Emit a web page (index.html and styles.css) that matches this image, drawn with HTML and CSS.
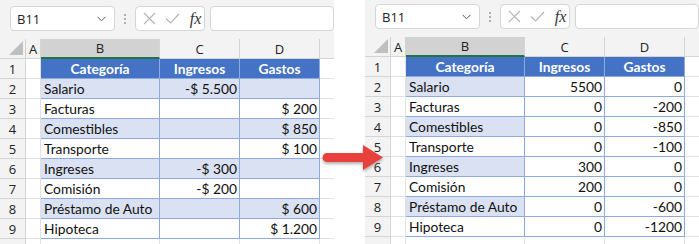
FILE: index.html
```html
<!DOCTYPE html>
<html lang="es">
<head>
<meta charset="utf-8">
<link rel="stylesheet" href="styles.css">
</head>
<body>
<div class="stage">
  <div class="panel">
    <div class="toolbar">
      <div class="namebox"><span>B11</span><svg class="chev" width="9" height="6" viewBox="0 0 9 6"><path d="M0.5 0.8 L4.5 4.8 L8.5 0.8" fill="none" stroke="#555" stroke-width="1"/></svg></div>
      <div class="dots"><i></i><i></i><i></i></div>
      <div class="fxbox">
        <svg width="13" height="13" viewBox="0 0 13 13"><path d="M1 1 L12 12 M12 1 L1 12" stroke="#b4b4b4" stroke-width="1.1" fill="none"/></svg>
        <svg width="15" height="11" viewBox="0 0 15 11"><path d="M1 5.5 L5.5 10 L14 1" stroke="#b4b4b4" stroke-width="1.1" fill="none"/></svg>
        <span class="fx">fx</span>
      </div>
      <div class="formula"></div>
    </div>
    <div class="sheet">
      <div class="corner"><b></b></div><div class="ch">A</div><div class="ch sel">B</div><div class="ch">C</div><div class="ch">D</div><div class="ch end"></div>

      <div class="rh">1</div><div class="c"></div><div class="th">Categoría</div><div class="th">Ingresos</div><div class="th">Gastos</div><div class="c e"></div>
      <div class="rh">2</div><div class="c"></div><div class="t b">Salario</div><div class="t b n">-$ 5.500</div><div class="t b n"></div><div class="c e"></div>
      <div class="rh">3</div><div class="c"></div><div class="t">Facturas</div><div class="t n"></div><div class="t n">$ 200</div><div class="c e"></div>
      <div class="rh">4</div><div class="c"></div><div class="t b">Comestibles</div><div class="t b n"></div><div class="t b n">$ 850</div><div class="c e"></div>
      <div class="rh">5</div><div class="c"></div><div class="t">Transporte</div><div class="t n"></div><div class="t n">$ 100</div><div class="c e"></div>
      <div class="rh">6</div><div class="c"></div><div class="t b">Ingreses</div><div class="t b n">-$ 300</div><div class="t b n"></div><div class="c e"></div>
      <div class="rh">7</div><div class="c"></div><div class="t">Comisión</div><div class="t n">-$ 200</div><div class="t n"></div><div class="c e"></div>
      <div class="rh">8</div><div class="c"></div><div class="t b">Préstamo de Auto</div><div class="t b n"></div><div class="t b n">$ 600</div><div class="c e"></div>
      <div class="rh">9</div><div class="c"></div><div class="t">Hipoteca</div><div class="t n"></div><div class="t n">$ 1.200</div><div class="c e"></div>
      <div class="rh"></div><div class="c"></div><div class="c"></div><div class="c"></div><div class="c"></div><div class="c e"></div>
    </div>
  </div>

  <div class="panel right">
    <div class="toolbar">
      <div class="namebox"><span>B11</span><svg class="chev" width="9" height="6" viewBox="0 0 9 6"><path d="M0.5 0.8 L4.5 4.8 L8.5 0.8" fill="none" stroke="#555" stroke-width="1"/></svg></div>
      <div class="dots"><i></i><i></i><i></i></div>
      <div class="fxbox">
        <svg width="13" height="13" viewBox="0 0 13 13"><path d="M1 1 L12 12 M12 1 L1 12" stroke="#b4b4b4" stroke-width="1.1" fill="none"/></svg>
        <svg width="15" height="11" viewBox="0 0 15 11"><path d="M1 5.5 L5.5 10 L14 1" stroke="#b4b4b4" stroke-width="1.1" fill="none"/></svg>
        <span class="fx">fx</span>
      </div>
      <div class="formula"></div>
    </div>
    <div class="sheet">
      <div class="corner"><b></b></div><div class="ch">A</div><div class="ch sel">B</div><div class="ch">C</div><div class="ch">D</div><div class="ch end"></div>

      <div class="rh">1</div><div class="c"></div><div class="th">Categoría</div><div class="th">Ingresos</div><div class="th">Gastos</div><div class="c e"></div>
      <div class="rh">2</div><div class="c"></div><div class="t b">Salario</div><div class="t n">5500</div><div class="t n">0</div><div class="c e"></div>
      <div class="rh">3</div><div class="c"></div><div class="t">Facturas</div><div class="t n">0</div><div class="t n">-200</div><div class="c e"></div>
      <div class="rh">4</div><div class="c"></div><div class="t b">Comestibles</div><div class="t n">0</div><div class="t n">-850</div><div class="c e"></div>
      <div class="rh">5</div><div class="c"></div><div class="t">Transporte</div><div class="t n">0</div><div class="t n">-100</div><div class="c e"></div>
      <div class="rh">6</div><div class="c"></div><div class="t b">Ingreses</div><div class="t n">300</div><div class="t n">0</div><div class="c e"></div>
      <div class="rh">7</div><div class="c"></div><div class="t">Comisión</div><div class="t n">200</div><div class="t n">0</div><div class="c e"></div>
      <div class="rh">8</div><div class="c"></div><div class="t b">Préstamo de Auto</div><div class="t n">0</div><div class="t n">-600</div><div class="c e"></div>
      <div class="rh">9</div><div class="c"></div><div class="t">Hipoteca</div><div class="t n">0</div><div class="t n">-1200</div><div class="c e"></div>
      <div class="rh"></div><div class="c"></div><div class="c"></div><div class="c"></div><div class="c"></div><div class="c e"></div>
    </div>
  </div>

  <svg class="arrow" width="70" height="40" viewBox="0 0 70 40">
    <defs>
      <filter id="sh" x="-20%" y="-30%" width="140%" height="170%">
        <feDropShadow dx="0" dy="2" stdDeviation="1.5" flood-color="#000" flood-opacity="0.3"/>
      </filter>
    </defs>
    <path d="M7 13 L43 13 L43 5 L63 17.5 L43 30 L43 22 L7 22 A4.5 4.5 0 0 1 7 13 Z" fill="#e8413c" filter="url(#sh)"/>
  </svg>
</div>
</body>
</html>
```

FILE: styles.css
```css
* { box-sizing: border-box; }
html, body { margin: 0; padding: 0; background: #fff; }
body { width: 699px; height: 244px; overflow: hidden; }

.stage {
  position: relative;
  display: flex;
  align-items: flex-start;
  gap: 31px;
  width: 699px;
  height: 244px;
  overflow: hidden;
}

.panel {
  width: 334px;
  height: 250px;
  overflow: hidden;
  background: #fff;
  flex: none;
}
.panel.right { margin-top: -2px; }

.toolbar {
  height: 39px;
  background: #f3f3f3;
  display: flex;
  align-items: flex-start;
  padding: 6px 0 0 10px;
  font-family: "Open Sans", "Noto Sans", sans-serif;
}
.namebox {
  width: 109px;
  height: 25px;
  background: #fff;
  border: 1px solid #d6d6d6;
  border-radius: 4px;
  display: flex;
  align-items: center;
  justify-content: space-between;
  padding: 0 8px 0 6px;
  font-size: 13px;
  color: #222;
}
.dots {
  width: 21px;
  height: 25px;
  display: flex;
  flex-direction: column;
  align-items: center;
  justify-content: center;
  gap: 2px;
}
.dots i { display: block; width: 2px; height: 2px; background: #9a9a9a; border-radius: 1px; }
.fxbox {
  width: 73px;
  height: 25px;
  background: #fff;
  border: 1px solid #d6d6d6;
  border-radius: 4px;
  display: flex;
  align-items: center;
  gap: 9px;
  padding-left: 7px;
}
.fx {
  font-family: "Liberation Serif", serif;
  font-style: italic;
  font-size: 16px;
  color: #333;
  margin-left: 1px;
}
.formula {
  margin-left: 5px;
  width: 130px;
  height: 25px;
  background: #fff;
  border: 1px solid #d6d6d6;
  border-radius: 4px;
}

.sheet {
  display: grid;
  grid-template-columns: 26px 15px 119px 80px 80px 14px;
  grid-auto-rows: 20px;
  font-family: Lato, "Liberation Sans", sans-serif;
  font-size: 13.8px;
  color: #111;
}
.sheet > div { border-right: 1px solid #e1e1e1; border-bottom: 1px solid #e1e1e1; }

.corner {
  background: #f3f3f3;
  position: relative;
}
.corner b {
  position: absolute;
  right: 2px;
  bottom: 3px;
  width: 0; height: 0;
  border-left: 14px solid transparent;
  border-bottom: 14px solid #bfbfbf;
}
.ch, .rh {
  background: #f3f3f3;
  font-family: "Open Sans", "Noto Sans", sans-serif;
  font-size: 13px;
  color: #222;
  display: flex;
  align-items: center;
  justify-content: center;
}
.sheet > .ch, .sheet > .rh, .sheet > .corner { border-color: #d4d4d4; }
.ch.sel {
  background: #d2d2d2;
  border-bottom: 2px solid #217346;
}
.ch.end { border-right: none; }
.c { background: #fff; }
.c.e { border-right: none; }

.th {
  background: #4472c4;
  color: #fff;
  font-weight: bold;
  display: flex;
  align-items: center;
  justify-content: center;
}
.sheet > .th { border-right: 1px solid #8ea9db; border-bottom: 1px solid #8ea9db; }
.t {
  background: #fff;
  display: flex;
  align-items: center;
  padding: 0 3px;
  white-space: nowrap;
}
.sheet > .t { border-right: 1px solid #8ea9db; border-bottom: 1px solid #8ea9db; }
.t.b { background: #d9e1f2; }
.t.n { justify-content: flex-end; padding-right: 2px; }

.arrow {
  position: absolute;
  left: 320px;
  top: 140px;
}
```
